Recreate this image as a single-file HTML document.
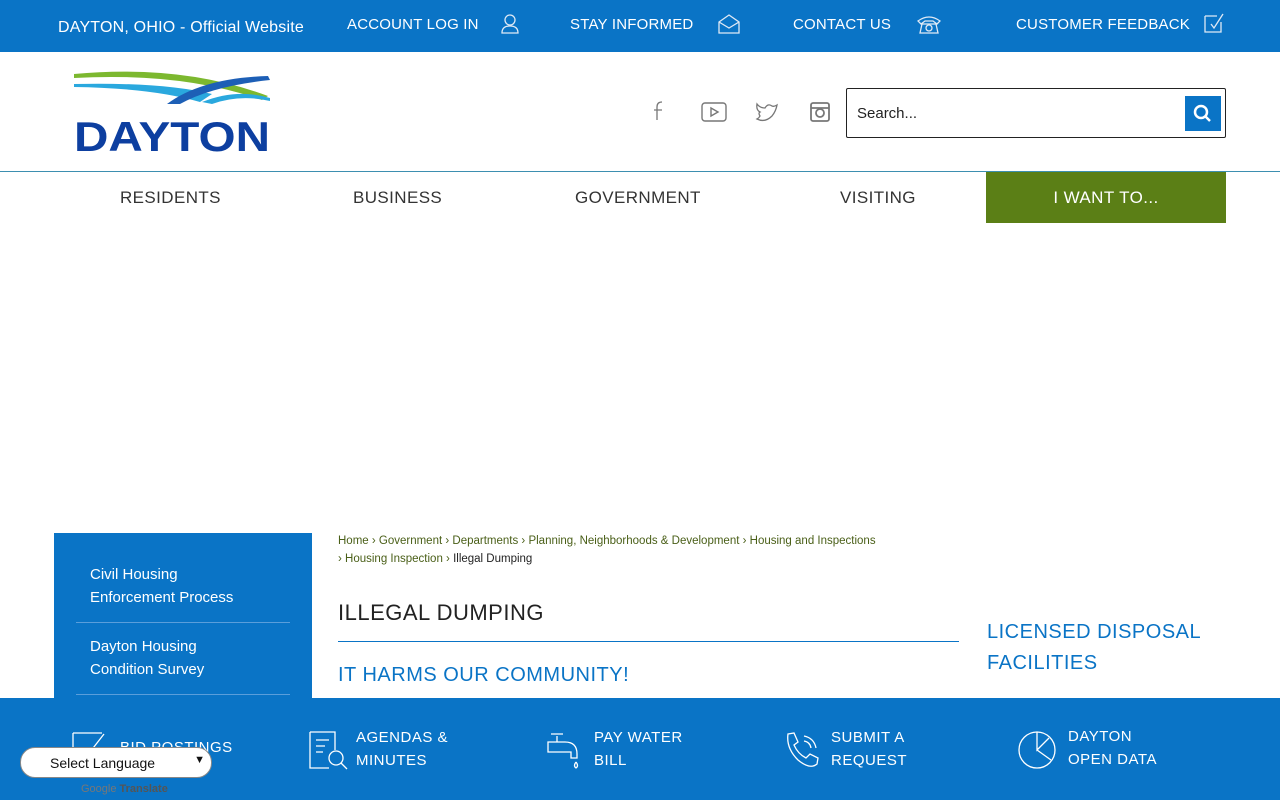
<!DOCTYPE html>
<html><head><meta charset="utf-8"><style>
*{margin:0;padding:0;box-sizing:border-box}
body{width:1280px;height:800px;overflow:hidden;background:#fff;font-family:"Liberation Sans",sans-serif;position:relative}
.top{position:absolute;top:0;left:0;width:1280px;height:52px;background:#0a74c6;color:#fff}
.top span{position:absolute;font-size:15px;letter-spacing:.2px}
.ico{position:absolute;stroke:#dfe9f5;fill:none;stroke-width:1.3}
.hdr{position:absolute;top:52px;left:0;width:1280px;height:120px;border-bottom:1px solid #3d8fb0}
.nav{position:absolute;top:172px;left:0;width:1280px;height:51px}
.nav span{position:absolute;top:16px;font-size:17px;color:#333;letter-spacing:.4px}
.want{position:absolute;left:986px;top:172px;width:240px;height:51px;background:#5b7f16;color:#fff;font-size:17px;text-align:center;line-height:51px;letter-spacing:.4px}
.side{position:absolute;left:54px;top:533px;width:258px;height:170px;background:#0a74c6;color:#fff}
.side div{position:absolute;left:36px;font-size:15px;line-height:23px}
.bc{position:absolute;left:338px;font-size:11.5px;color:#4a5f18}
.foot{position:absolute;top:698px;left:0;width:1280px;height:102px;background:#0a74c6;color:#fff}
.foot .t{position:absolute;font-size:15px;line-height:23px;letter-spacing:.5px}
</style></head><body>
<div class="top">
<span style="left:58px;top:19px;font-size:16px">DAYTON, OHIO - Official Website</span>
<span style="left:347px;top:16px">ACCOUNT LOG IN</span>
<svg class="ico" style="left:500px;top:13px" width="20" height="22"><circle cx="10" cy="7" r="5"/><path d="M2 20 Q2 13 10 13 Q18 13 18 20 Z"/></svg>
<span style="left:570px;top:16px">STAY INFORMED</span>
<svg class="ico" style="left:717px;top:13px" width="24" height="22"><path d="M2 9 L12 2 L22 9 V20 H2 Z M2 9 L12 15 L22 9"/></svg>
<span style="left:793px;top:16px">CONTACT US</span>
<svg class="ico" style="left:916px;top:13px" width="26" height="22"><path d="M2 8 Q13 0 24 8 L21 11 L17 8 H9 L5 11 Z M6 11 H20 L22 20 H4 Z"/><circle cx="13" cy="15" r="3"/></svg>
<span style="left:1016px;top:16px">CUSTOMER FEEDBACK</span>
<svg class="ico" style="left:1203px;top:12px" width="22" height="22"><path d="M2 4 H14 M2 4 V20 H18 V10 M8 12 L11 16 L20 2"/></svg>
</div>
<div class="hdr">
<svg style="position:absolute;left:72px;top:16px" width="200" height="86">
<path d="M2 6 Q110 -4 196 28 L190 32 Q110 4 2 10Z" fill="#7cb82f"/>
<path d="M2 16 Q90 14 140 26 L128 34 Q80 20 2 19Z" fill="#2aa8de"/>
<path d="M95 36 Q130 10 196 8 L198 12 Q140 18 108 36Z" fill="#1d5fb6"/>
<path d="M130 34 Q165 20 198 30 L198 33 Q168 26 140 36Z" fill="#2aa8de"/>
<text x="2" y="83" font-family="Liberation Sans" font-weight="bold" font-size="42" fill="#0d3fa0" textLength="196" lengthAdjust="spacingAndGlyphs">DAYTON</text>
</svg>
<svg style="position:absolute;left:650px;top:48px" width="20" height="22" fill="none" stroke="#777" stroke-width="1.3"><path d="M12 2 Q7 2 7 7 V20 M4 10 H12"/></svg>
<svg style="position:absolute;left:701px;top:49px" width="26" height="22" fill="none" stroke="#777" stroke-width="1.4"><rect x="1" y="2" width="24" height="18" rx="3"/><path d="M10 7 L17 11 L10 15Z"/></svg>
<svg style="position:absolute;left:755px;top:49px" width="24" height="22" fill="none" stroke="#777" stroke-width="1.3"><path d="M22 4 Q19 6 17 5 Q13 2 10 7 Q5 7 2 3 Q1 9 5 11 Q3 12 5 15 Q4 17 2 18 Q10 22 17 15 Q21 10 22 4Z"/></svg>
<svg style="position:absolute;left:809px;top:49px" width="22" height="22" fill="none" stroke="#777" stroke-width="1.8"><rect x="2" y="2" width="18" height="18" rx="2"/><circle cx="11" cy="12" r="4"/><path d="M2 7 H20"/></svg>
<div style="position:absolute;left:846px;top:36px;width:380px;height:50px;border:1px solid #222;border-radius:2px"><span style="position:absolute;left:10px;top:16px;font-size:15px;color:#222">Search...</span>
<div style="position:absolute;right:4px;top:7px;width:36px;height:35px;background:#0a74c6"><svg width="36" height="35" fill="none" stroke="#fff" stroke-width="2.5"><circle cx="16" cy="16" r="6"/><path d="M20 20 L25 25"/></svg></div></div>
</div>
<div class="nav"><span style="left:120px">RESIDENTS</span><span style="left:353px">BUSINESS</span><span style="left:575px">GOVERNMENT</span><span style="left:840px">VISITING</span></div>
<div class="want">I WANT TO...</div>
<div class="side">
<div style="top:30px">Civil Housing<br>Enforcement Process</div>
<div style="top:89px;left:22px;width:214px;border-top:1px solid #5a9edb"></div>
<div style="top:102px">Dayton Housing<br>Condition Survey</div>
<div style="top:161px;left:22px;width:214px;border-top:1px solid #5a9edb"></div>
</div>
<div class="bc" style="top:535px">Home › Government › Departments › Planning, Neighborhoods &amp; Development › Housing and Inspections</div>
<div class="bc" style="top:553px">› Housing Inspection › <span style="color:#222">Illegal Dumping</span></div>
<div style="position:absolute;left:338px;top:600px;font-size:22px;color:#222;letter-spacing:.5px">ILLEGAL DUMPING</div>
<div style="position:absolute;left:338px;top:641px;width:621px;border-top:1px solid #0a74c6"></div>
<div style="position:absolute;left:338px;top:664px;font-size:20px;color:#0a74c6;letter-spacing:.5px">IT HARMS OUR COMMUNITY!</div>
<div style="position:absolute;left:987px;top:617px;font-size:20px;color:#0a74c6;line-height:31px;letter-spacing:.5px">LICENSED DISPOSAL<br>FACILITIES</div>
<div class="foot">
<svg class="ico" style="left:70px;top:32px;stroke:#fff" width="42" height="42"><path d="M3 3 H32 M3 3 V38 M34 4 L20 22"/></svg>
<div class="t" style="left:120px;top:38px">BID POSTINGS</div>
<svg class="ico" style="left:307px;top:32px;stroke:#fff" width="44" height="44"><path d="M3 2 H28 V20 M3 2 V38 H22 M9 10 H22 M9 16 H18 M9 22 H16"/><circle cx="29" cy="28" r="7"/><path d="M34 33 L40 39"/></svg>
<div class="t" style="left:356px;top:28px">AGENDAS &amp;<br>MINUTES</div>
<svg class="ico" style="left:545px;top:32px;stroke:#fff" width="40" height="42"><path d="M3 12 H20 Q32 12 32 24 V28 H26 V22 H3 Z M12 12 V6 M6 4 H18 M31 32 Q28 36 31 38 Q34 36 31 32"/></svg>
<div class="t" style="left:594px;top:28px">PAY WATER<br>BILL</div>
<svg class="ico" style="left:782px;top:32px;stroke:#fff" width="40" height="42"><path d="M6 4 L12 3 L16 12 L12 15 Q16 24 24 28 L28 24 L36 28 L35 34 Q28 40 16 30 Q4 18 6 4Z M22 6 Q32 8 34 18 M22 11 Q28 12 29 18"/></svg>
<div class="t" style="left:831px;top:28px">SUBMIT A<br>REQUEST</div>
<svg class="ico" style="left:1017px;top:32px;stroke:#fff" width="40" height="40"><circle cx="20" cy="20" r="18"/><path d="M20 2 V20 L32 8 M20 20 L34 30"/></svg>
<div class="t" style="left:1068px;top:27px">DAYTON<br>OPEN DATA</div>
</div>
<div style="position:absolute;left:20px;top:747px;width:192px;height:31px;background:#fff;border:1px solid #888;border-radius:15px;font-size:14px;color:#111;padding:7px 0 0 29px">Select Language<span style="position:absolute;right:6px;top:6px;font-size:11px">&#9660;</span></div>
<div style="position:absolute;left:81px;top:783px;font-size:11px;color:#777">Google <b style="color:#555">Translate</b></div>
</body></html>
